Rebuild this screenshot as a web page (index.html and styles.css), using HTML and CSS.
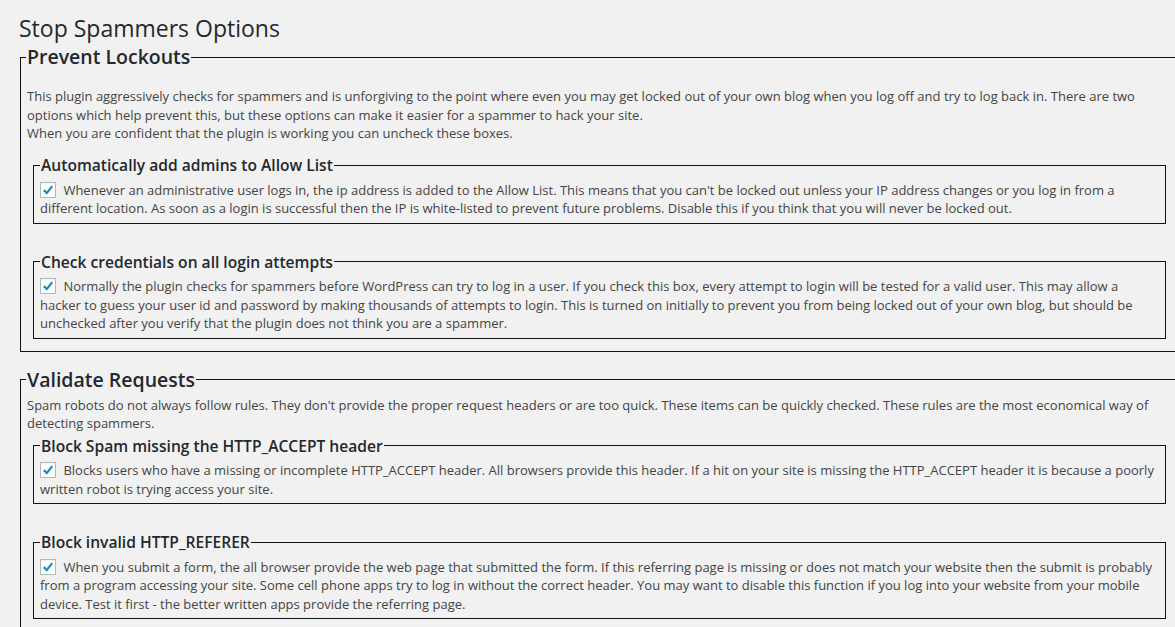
FILE: index.html
```html
<!DOCTYPE html>
<html lang="en">
<head>
<meta charset="utf-8">
<title>Stop Spammers Options</title>
<link rel="stylesheet" href="styles.css">
</head>
<body>
<div class="wrap">
  <h1 class="title">Stop Spammers Options</h1>

  <fieldset class="group">
    <legend class="group-title">Prevent Lockouts</legend>
    <p class="intro intro-first">This plugin aggressively checks for spammers and is unforgiving to the point where even you may get locked out of your own blog when you log off and try to log back in. There are two options which help prevent this, but these options can make it easier for a spammer to hack your site.<br>When you are confident that the plugin is working you can uncheck these boxes.</p>

    <fieldset class="option option-first">
      <legend class="option-title">Automatically add admins to Allow List</legend>
      <p class="option-text"><span class="check"><svg viewBox="0 0 16 16" width="16" height="16"><path d="M3.2 8.2 L6.6 11.6 L12.8 3.6" /></svg></span> Whenever an administrative user logs in, the ip address is added to the Allow List. This means that you can't be locked out unless your IP address changes or you log in from a different location. As soon as a login is successful then the IP is white-listed to prevent future problems. Disable this if you think that you will never be locked out.</p>
    </fieldset>

    <fieldset class="option">
      <legend class="option-title">Check credentials on all login attempts</legend>
      <p class="option-text"><span class="check"><svg viewBox="0 0 16 16" width="16" height="16"><path d="M3.2 8.2 L6.6 11.6 L12.8 3.6" /></svg></span> Normally the plugin checks for spammers before WordPress can try to log in a user. If you check this box, every attempt to login will be tested for a valid user. This may allow a hacker to guess your user id and password by making thousands of attempts to login. This is turned on initially to prevent you from being locked out of your own blog, but should be unchecked after you verify that the plugin does not think you are a spammer.</p>
    </fieldset>
  </fieldset>

  <fieldset class="group group-second">
    <legend class="group-title">Validate Requests</legend>
    <p class="intro">Spam robots do not always follow rules. They don't provide the proper request headers or are too quick. These items can be quickly checked. These rules are the most economical way of detecting spammers.</p>

    <fieldset class="option option-first-tight">
      <legend class="option-title">Block Spam missing the HTTP_ACCEPT header</legend>
      <p class="option-text"><span class="check"><svg viewBox="0 0 16 16" width="16" height="16"><path d="M3.2 8.2 L6.6 11.6 L12.8 3.6" /></svg></span> Blocks users who have a missing or incomplete HTTP_ACCEPT header. All browsers provide this header. If a hit on your site is missing the HTTP_ACCEPT header it is because a poorly written robot is trying access your site.</p>
    </fieldset>

    <fieldset class="option">
      <legend class="option-title">Block invalid HTTP_REFERER</legend>
      <p class="option-text"><span class="check"><svg viewBox="0 0 16 16" width="16" height="16"><path d="M3.2 8.2 L6.6 11.6 L12.8 3.6" /></svg></span> When you submit a form, the all browser provide the web page that submitted the form. If this referring page is missing or does not match your website then the submit is probably from a program accessing your site. Some cell phone apps try to log in without the correct header. You may want to disable this function if you log into your website from your mobile device. Test it first - the better written apps provide the referring page.</p>
    </fieldset>
  </fieldset>
</div>
</body>
</html>
```

FILE: styles.css
```css
html, body {
  margin: 0;
  padding: 0;
  overflow: hidden;
  background: #f1f1f1;
}

body {
  font-family: "Open Sans", "Noto Sans", sans-serif;
  font-size: 13px;
  line-height: 18.5px;
  color: #444;
}

.wrap {
  width: 1200px;
}

.title {
  margin: 13px 0 0 19px;
  font-size: 23px;
  font-weight: 400;
  line-height: 30px;
  color: #23282d;
}

.group {
  box-sizing: border-box;
  width: 1159px;
  margin: 2px 0 0 20px;
  padding: 0 6px 12px;
  border: 1px solid #111;
  min-width: 0;
}

.group-second {
  margin-top: 16px;
}

.group-title {
  margin-left: -1px;
  padding: 0 1px;
  font-size: 19.5px;
  font-weight: 600;
  line-height: 24px;
  color: #23282d;
}

.intro {
  margin: 4px 0 0;
}

.intro-first {
  margin-top: 18px;
}

.option {
  margin: 28px 6px 0;
  padding: 0 6px 5px;
  border: 1px solid #111;
  min-width: 0;
}

.option-first {
  margin-top: 12.5px;
}

.option-first-tight {
  margin-top: 3px;
}

.option-title {
  padding: 0 1px;
  font-size: 15.6px;
  font-weight: 600;
  line-height: 20px;
  color: #23282d;
}

.option-text {
  margin: 5.5px 0 0;
}

.check {
  display: inline-block;
  box-sizing: border-box;
  width: 16px;
  height: 16px;
  margin-right: 4px;
  vertical-align: -3px;
  background: #fff;
  border: 1px solid #b4b9be;
  box-shadow: inset 0 1px 2px rgba(0, 0, 0, 0.07);
}

.check svg {
  display: block;
  width: 14px;
  height: 14px;
}

.check path {
  fill: none;
  stroke: #1e8cbe;
  stroke-width: 2.6;
}
```
